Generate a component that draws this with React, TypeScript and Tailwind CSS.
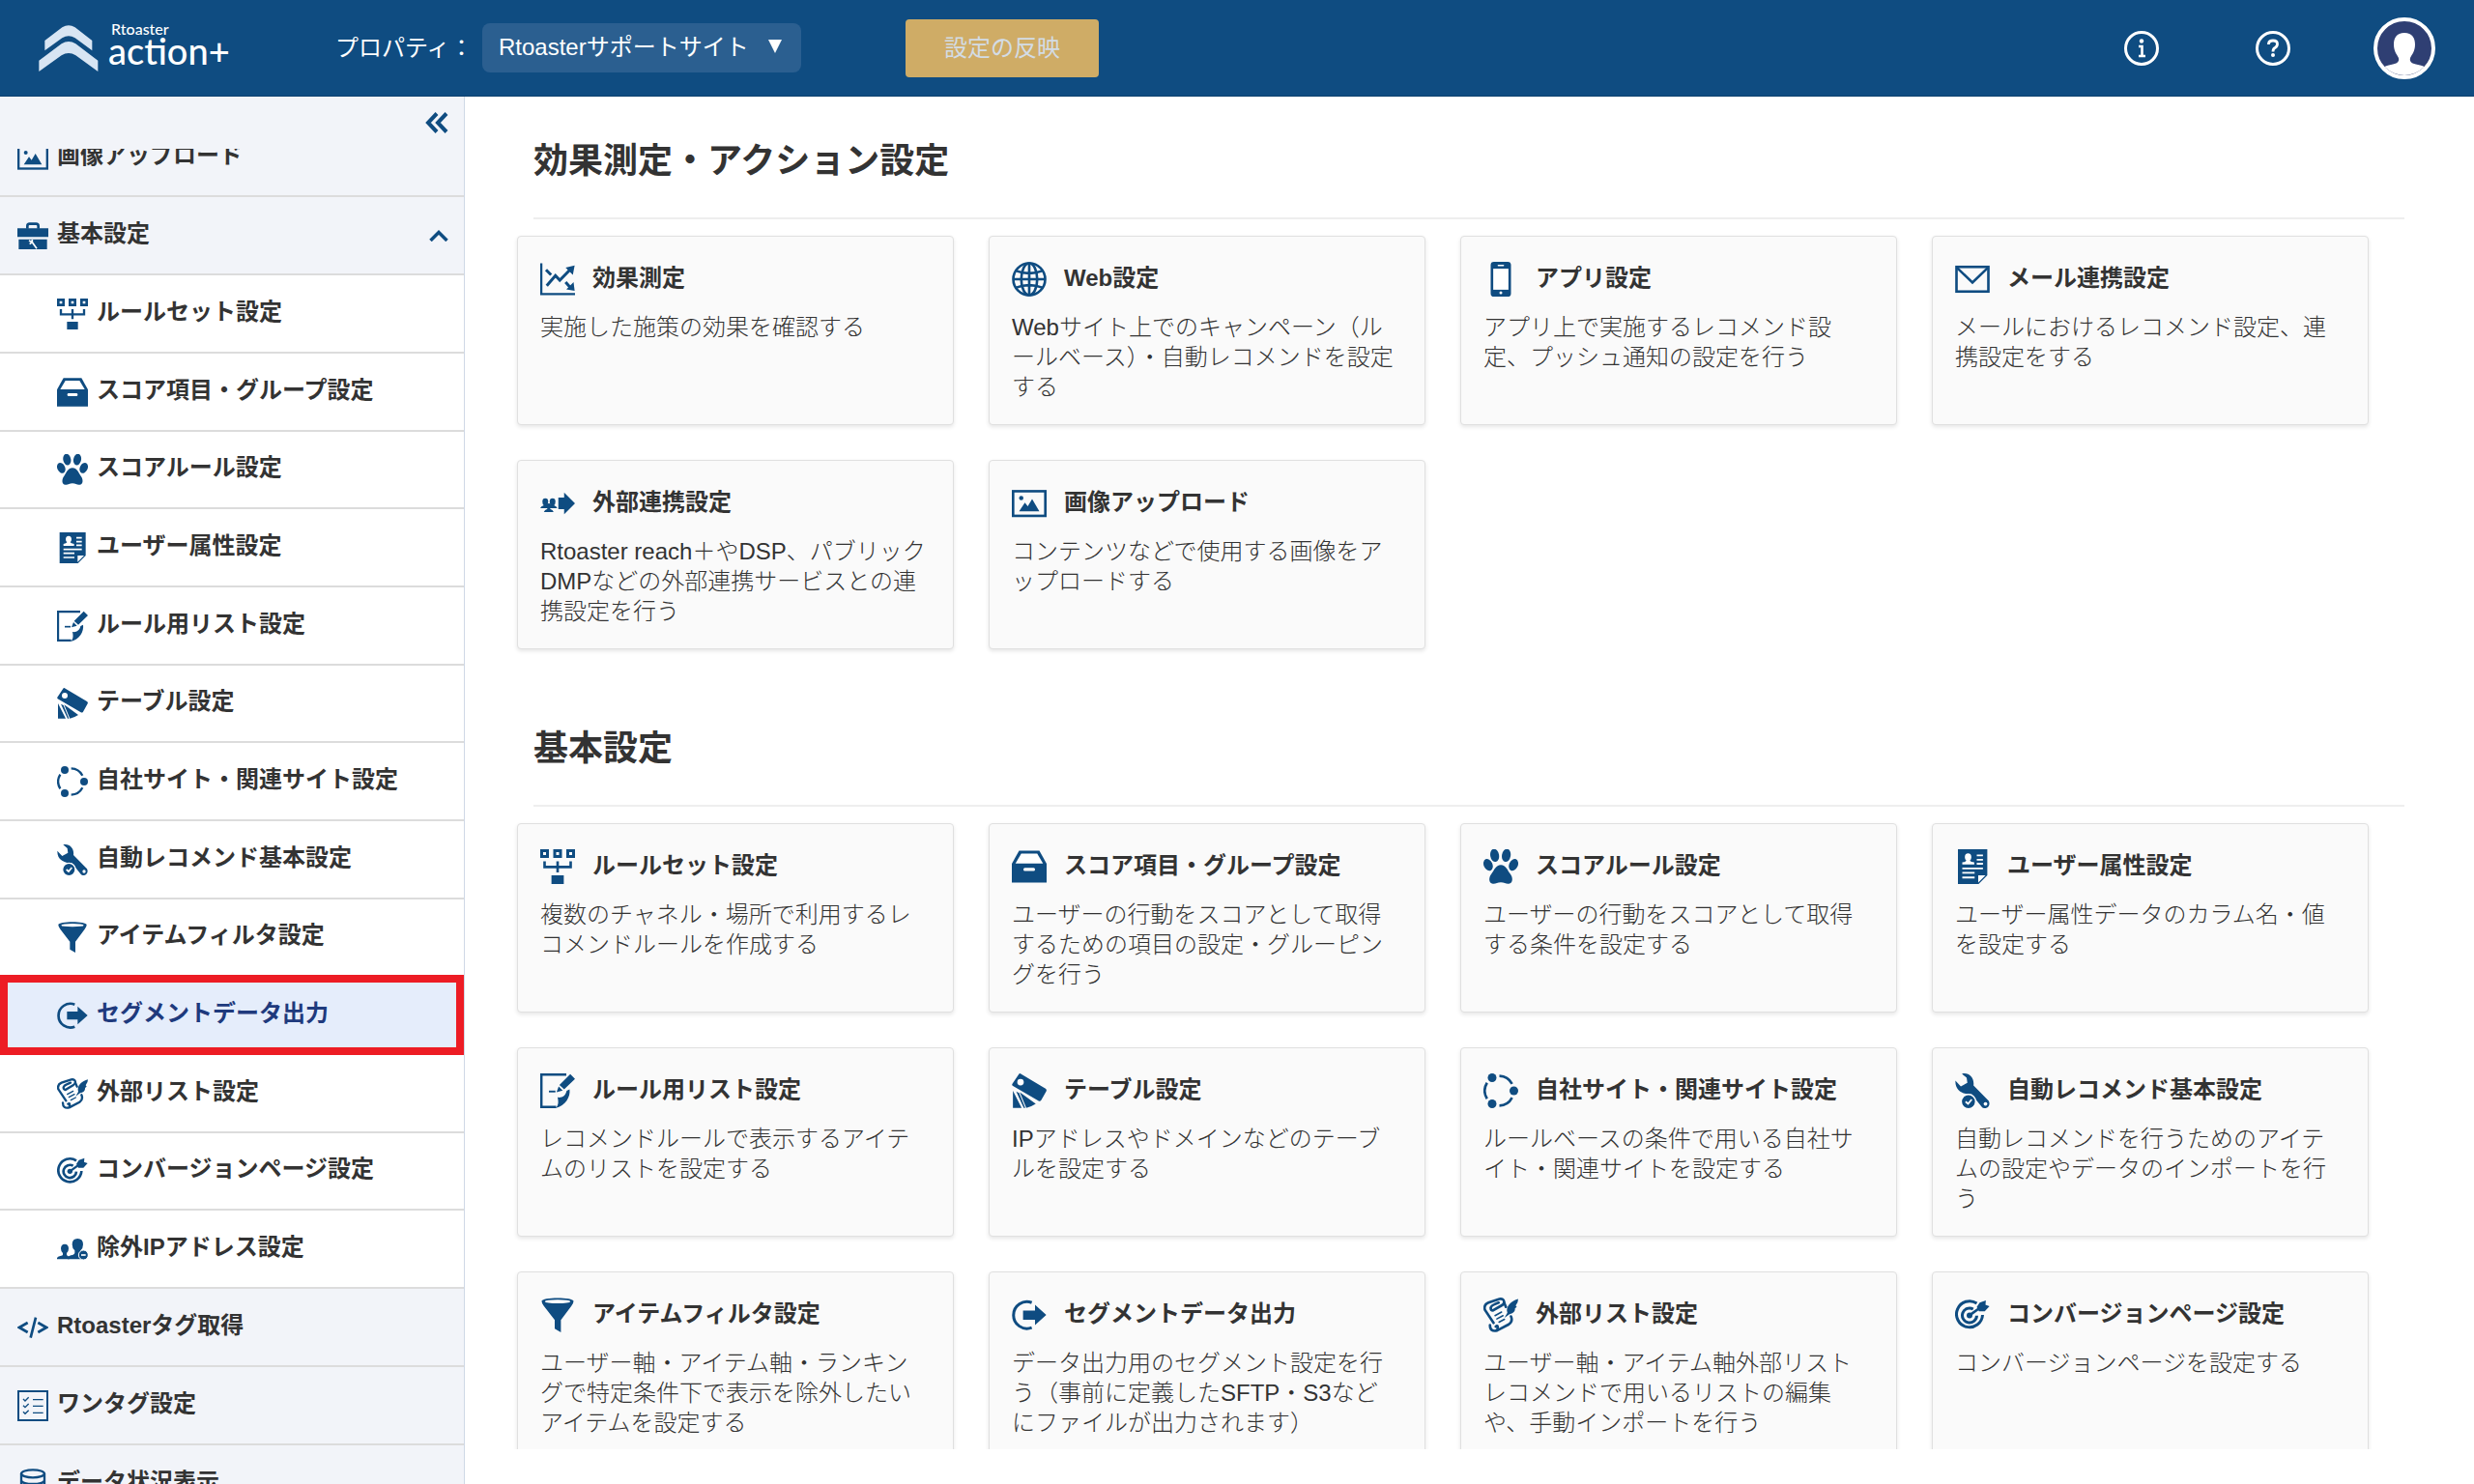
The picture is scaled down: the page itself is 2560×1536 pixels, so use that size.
import type { ReactNode } from 'react'

type IconName =
  | 'chart' | 'globe' | 'phone' | 'mail' | 'external' | 'image' | 'briefcase'
  | 'ruleset' | 'drawer' | 'paw' | 'profile' | 'edit' | 'table' | 'sites'
  | 'wrench' | 'funnel' | 'export' | 'scroll' | 'target' | 'users'
  | 'code' | 'checklist' | 'database'

interface Item {
  icon: IconName
  title: string
  desc?: string
}

// All glyphs share a 96x96 box
const ICONS: Record<IconName, ReactNode> = {
  chart: (
    <>
      <path d="M3 4V89H96" fill="none" stroke="currentColor" strokeWidth="6" />
      <path d="M18 66L42 38L54 51L84 20M16 22L30 36M70 56L84 72" fill="none" stroke="currentColor" strokeWidth="8" />
      <path d="M70 16L95 10L90 36ZM95 80L72 76L92 56Z" fill="currentColor" />
    </>
  ),
  globe: (
    <g fill="none" stroke="currentColor" strokeWidth="7">
      <circle cx="48" cy="48" r="44" />
      <ellipse cx="48" cy="48" rx="22" ry="44" />
      <path d="M48 4V92M4 48H92M12 25Q48 38 84 25M12 71Q48 58 84 71" />
    </g>
  ),
  phone: (
    <>
      <rect x="20" y="0" width="56" height="96" rx="9" fill="currentColor" />
      <rect x="27" y="19" width="42" height="58" fill="#fff" />
      <rect x="39" y="8" width="18" height="4" rx="2" fill="#fff" />
      <circle cx="48" cy="85" r="4" fill="#fff" />
    </>
  ),
  mail: (
    <g fill="none" stroke="currentColor" strokeWidth="7">
      <rect x="4" y="14" width="88" height="68" />
      <path d="M4 15L48 57L92 15" />
    </g>
  ),
  external: (
    <g fill="currentColor">
      <path d="M50 32H66V18L96 48L66 78V64H50Z" />
      <path d="M14 34q8 0 8 9q0 7-4 10q8 2 10 8H0q2-6 10-8q-4-3-4-10q0-9 8-9Z" />
      <path d="M34 34q8 0 8 9q0 7-4 10q7 2 9 8H22q2-6 8-8q-4-3-4-10q0-9 8-9Z" />
      <path d="M24 48q6 0 6 8q0 5-3 7q8 2 10 9H10q2-7 10-9q-3-2-3-7q0-8 7-8Z" />
    </g>
  ),
  image: (
    <>
      <rect x="3.500" y="14.500" width="89" height="68" fill="none" stroke="currentColor" strokeWidth="7" />
      <circle cx="26" cy="33" r="6" fill="currentColor" />
      <path d="M20 70L36 46L44 56L56 36L76 70Z" fill="currentColor" />
    </>
  ),
  briefcase: (
    <>
      <path d="M31 26V18Q31 11 38 11H58Q65 11 65 18V26" fill="none" stroke="currentColor" strokeWidth="8" />
      <path d="M0 25H96V52H0ZM4 59H92V90H4Z" fill="currentColor" />
      <path d="M36 63L46 68L60 88M38 74L46 68L46 60" fill="none" stroke="#fff" strokeWidth="5" />
    </>
  ),
  ruleset: (
    <>
      <path d="M4 4H20V20H4ZM40 4H56V20H40ZM76 4H92V20H76Z" fill="none" stroke="currentColor" strokeWidth="8" />
      <path d="M12 33V49H84V33M48 33V64" fill="none" stroke="currentColor" strokeWidth="7" />
      <path d="M31 72H65V96H31Z" fill="currentColor" />
    </>
  ),
  drawer: (
    <>
      <path d="M20 4H76L96 40V92H0V40Z" fill="currentColor" />
      <path d="M26 12H70L86 39H10Z" fill="#fff" />
      <rect x="32" y="51" width="32" height="9" rx="4" fill="#fff" />
    </>
  ),
  paw: (
    <g fill="currentColor">
      <ellipse cx="31" cy="17" rx="12" ry="18" transform="rotate(-10 31 17)" />
      <ellipse cx="63" cy="17" rx="12" ry="18" transform="rotate(10 63 17)" />
      <ellipse cx="13" cy="43" rx="12" ry="17" transform="rotate(-25 13 43)" />
      <ellipse cx="83" cy="43" rx="12" ry="17" transform="rotate(25 83 43)" />
      <path d="M48 43C62 43 66 57 74 68C82 78 82 94 70 95C62 96 58 91 48 91C38 91 34 96 26 95C14 94 14 78 22 68C30 57 34 43 48 43Z" />
    </g>
  ),
  profile: (
    <>
      <path d="M8 0H89V72L65 96H8Z" fill="currentColor" />
      <path d="M64 72H84L64 92Z" fill="#fff" />
      <path d="M36 11q9 0 9 11q0 6-4 9q2 4 12 5v6H20v-6q9-1 11-5q-4-3-4-9q0-11 9-11Z" fill="#fff" />
      <path d="M60 17H77M60 29H77M60 40H77M20 53H77M20 65H54M20 78H54" stroke="#fff" strokeWidth="5" />
    </>
  ),
  edit: (
    <>
      <path d="M72 3H3V93H44" fill="none" stroke="currentColor" strokeWidth="7" />
      <path d="M81 44C84 64 70 90 42 96C52 88 50 76 48 66C60 68 70 62 73 48Z" fill="currentColor" />
      <path d="M83 2L96 15L66 44L53 32ZM51 36L62 47L45 52Z" fill="currentColor" />
      <path d="M24 50H42" stroke="currentColor" strokeWidth="5" />
    </>
  ),
  table: (
    <>
      <path d="M20 1Q22-1 26 2L93 42Q97 45 95 49L81 74Q78 78 74 76L2 34Q0 32 1 29Z" fill="currentColor" />
      <circle cx="24" cy="24" r="9" fill="#fff" />
      <path d="M3 48V95H27ZM12 50L33 95H37L20 54ZM22 52L40 95Q54 92 66 84Z" fill="currentColor" />
    </>
  ),
  sites: (
    <>
      <g fill="currentColor">
        <circle cx="24" cy="12" r="12" />
        <circle cx="84" cy="48" r="12" />
        <circle cx="24" cy="84" r="12" />
      </g>
      <path d="M44 7A41 41 0 0 1 79 29M79 67A41 41 0 0 1 44 89M10 26A42 42 0 0 0 10 70" fill="none" stroke="currentColor" strokeWidth="7" />
    </>
  ),
  wrench: (
    <>
      <path d="M19 1C38-4 54 12 51 33L93 76C100 90 86 101 75 94L46 58C22 58 0 48 1 20L16 36L34 26L32 12Z" fill="currentColor" />
      <circle cx="84" cy="84" r="5" fill="#fff" />
      <circle cx="37" cy="78" r="20" fill="currentColor" stroke="#fff" strokeWidth="4" />
      <path d="M29 78L36 84L46 72" fill="none" stroke="#fff" strokeWidth="5" />
    </>
  ),
  funnel: (
    <>
      <path d="M4 10C4-2 92-2 92 10Q92 16 86 23L57 62V96L40 86V62L10 23Q4 16 4 10Z" fill="currentColor" />
      <ellipse cx="48" cy="11" rx="35" ry="5" fill="#fff" />
    </>
  ),
  export: (
    <>
      <path d="M55 14A37 37 0 1 0 55 83" fill="none" stroke="currentColor" strokeWidth="8" />
      <path d="M31 36H64V20L95 48L64 76V61H31Z" fill="currentColor" />
    </>
  ),
  scroll: (
    <>
      <g fill="none" stroke="currentColor" strokeWidth="7" strokeLinecap="round">
        <path d="M28 70L4 34Q0 20 14 14L44 4Q56 2 57 12Q57 18 50 22L26 36Q20 36 20 28Q22 22 30 19L42 14" />
        <path d="M57 14L62 26M76 52Q82 66 70 74L38 91Q18 96 18 76M34 80Q42 74 38 90" />
        <path d="M32 50L50 40M37 59L54 50M43 68L58 60" strokeWidth="4" />
      </g>
      <path d="M96 4C78 8 60 24 66 42L58 56L72 46C84 44 88 36 87 30L92 26L89 22Q96 14 96 4Z" fill="currentColor" />
    </>
  ),
  target: (
    <>
      <path d="M60 16A36 36 0 1 0 76 48M50 32A20 20 0 1 0 60 50" fill="none" stroke="currentColor" strokeWidth="8" />
      <circle cx="40" cy="49" r="8" fill="currentColor" />
      <path d="M40 49L72 26" stroke="currentColor" strokeWidth="7" />
      <path d="M60 26L68 14L85 8L84 20L95 24L82 38L66 38Z" fill="currentColor" />
    </>
  ),
  users: (
    <>
      <path d="M24 32q12 0 12 14q0 10-6 14v6q3 4 8 5v8H0v-4q2-4 10-6q8-2 8-4v-5q-6-4-6-14q0-14 12-14Z" fill="currentColor" />
      <path d="M64 15q17 0 17 18q0 12-8 19v8q4 4 14 7v12H33v-5q2-5 10-7q12-3 12-8v-7q-8-7-8-19q0-18 17-18Z" fill="currentColor" />
      <circle cx="82" cy="66" r="15" fill="currentColor" stroke="#fff" strokeWidth="3" />
      <path d="M75 66H89" stroke="#fff" strokeWidth="5" />
    </>
  ),
  code: (
    <path d="M32 33L6 48L32 63M64 33L90 48L64 63M57 17L41 80" fill="none" stroke="currentColor" strokeWidth="8" />
  ),
  checklist: (
    <>
      <rect x="3" y="3" width="90" height="90" fill="none" stroke="currentColor" strokeWidth="6" />
      <path d="M18 27L24 33L35 22M18 47L24 53L35 42M18 67L24 73L35 62M48 29H80M48 49H80M48 70H80" fill="none" stroke="currentColor" strokeWidth="4" />
    </>
  ),
  database: (
    <g fill="none" stroke="currentColor" strokeWidth="7">
      <ellipse cx="48" cy="16" rx="36" ry="12" />
      <path d="M12 16V80C12 96 84 96 84 80V16M12 36C12 52 84 52 84 36M12 58C12 74 84 74 84 58" />
    </g>
  ),
}

const ACTION_ITEMS: Item[] = [
  { icon: 'chart', title: '効果測定', desc: '実施した施策の効果を確認する' },
  { icon: 'globe', title: 'Web設定', desc: 'Webサイト上でのキャンペーン（ルールベース）・自動レコメンドを設定する' },
  { icon: 'phone', title: 'アプリ設定', desc: 'アプリ上で実施するレコメンド設定、プッシュ通知の設定を行う' },
  { icon: 'mail', title: 'メール連携設定', desc: 'メールにおけるレコメンド設定、連携設定をする' },
  { icon: 'external', title: '外部連携設定', desc: 'Rtoaster reach＋やDSP、パブリックDMPなどの外部連携サービスとの連携設定を行う' },
  { icon: 'image', title: '画像アップロード', desc: 'コンテンツなどで使用する画像をアップロードする' },
]

const BASIC_ITEMS: Item[] = [
  { icon: 'ruleset', title: 'ルールセット設定', desc: '複数のチャネル・場所で利用するレコメンドルールを作成する' },
  { icon: 'drawer', title: 'スコア項目・グループ設定', desc: 'ユーザーの行動をスコアとして取得するための項目の設定・グルーピングを行う' },
  { icon: 'paw', title: 'スコアルール設定', desc: 'ユーザーの行動をスコアとして取得する条件を設定する' },
  { icon: 'profile', title: 'ユーザー属性設定', desc: 'ユーザー属性データのカラム名・値を設定する' },
  { icon: 'edit', title: 'ルール用リスト設定', desc: 'レコメンドルールで表示するアイテムのリストを設定する' },
  { icon: 'table', title: 'テーブル設定', desc: 'IPアドレスやドメインなどのテーブルを設定する' },
  { icon: 'sites', title: '自社サイト・関連サイト設定', desc: 'ルールベースの条件で用いる自社サイト・関連サイトを設定する' },
  { icon: 'wrench', title: '自動レコメンド基本設定', desc: '自動レコメンドを行うためのアイテムの設定やデータのインポートを行う' },
  { icon: 'funnel', title: 'アイテムフィルタ設定', desc: 'ユーザー軸・アイテム軸・ランキングで特定条件下で表示を除外したいアイテムを設定する' },
  { icon: 'export', title: 'セグメントデータ出力', desc: 'データ出力用のセグメント設定を行う（事前に定義したSFTP・S3などにファイルが出力されます）' },
  { icon: 'scroll', title: '外部リスト設定', desc: 'ユーザー軸・アイテム軸外部リストレコメンドで用いるリストの編集や、手動インポートを行う' },
  { icon: 'target', title: 'コンバージョンページ設定', desc: 'コンバージョンページを設定する' },
]

const SUBMENU: Item[] = [...BASIC_ITEMS, { icon: 'users', title: '除外IPアドレス設定' }]

const LOWER_MENU: Item[] = [
  { icon: 'code', title: 'Rtoasterタグ取得' },
  { icon: 'checklist', title: 'ワンタグ設定' },
  { icon: 'database', title: 'データ状況表示' },
]

const ACTIVE_TITLE = 'セグメントデータ出力'

function Icon({ name, className }: { name: IconName; className: string }) {
  return (
    <svg viewBox="0 0 96 96" aria-hidden="true" className={`shrink-0 text-[#0f4c81] ${className}`}>
      {ICONS[name]}
    </svg>
  )
}

function Logo() {
  return (
    <a href="#" className="flex items-center gap-[10px] pl-10 text-white">
      <svg viewBox="0 0 184 144" className="h-12 w-[62px]" aria-hidden="true">
        <g fill="#d8e5f3">
          <path d="M18 48L72 7Q92-6 112 7L165 48V79L112 40Q92 28 72 40L18 79Z" />
          <path d="M0 110L70 58Q92 44 114 58L183 110V144L114 94Q92 80 70 94L0 144Z" />
        </g>
      </svg>
      <span className="flex flex-col pb-[11px] font-['Lato','Liberation_Sans',sans-serif] font-medium">
        <span className="pl-[3px] text-base leading-4">Rtoaster</span>
        <span className="text-[38px] leading-7">action+</span>
      </span>
    </a>
  )
}

function Header() {
  return (
    <header className="flex h-[100px] shrink-0 items-center border-b border-[#0d416f] bg-[#0f4c81] text-white">
      <div className="w-[347px] shrink-0">
        <Logo />
      </div>
      <label htmlFor="property" className="w-[152px] shrink-0 whitespace-nowrap">プロパティ：</label>
      <div className="relative shrink-0">
        <select
          id="property"
          className="h-[51px] w-[330px] appearance-none rounded-lg bg-[#2b5f90] pb-0.5 pl-[17px] text-2xl text-white"
        >
          <option>Rtoasterサポートサイト</option>
        </select>
        <svg viewBox="0 0 14 14" className="pointer-events-none absolute top-[17px] right-5 size-[14px]" aria-hidden="true">
          <path d="M0 0H14L7 14Z" fill="#fff" />
        </svg>
      </div>
      <button type="button" className="ml-[108px] h-[60px] w-[200px] shrink-0 rounded-sm bg-[#cfac66] text-[#d3dce5]">
        設定の反映
      </button>
      <nav className="ml-auto flex items-center pr-10">
        <button type="button" aria-label="お知らせ" className="mr-[100px]">
          <svg viewBox="0 0 36 36" className="size-9" aria-hidden="true">
            <circle cx="18" cy="18" r="16.500" fill="none" stroke="#fff" strokeWidth="3" />
            <circle cx="18" cy="10.500" r="2.200" fill="#fff" />
            <path d="M15 16H18.500V26M15 26H22" fill="none" stroke="#fff" strokeWidth="2.600" />
          </svg>
        </button>
        <button type="button" aria-label="ヘルプ" className="mr-[86px]">
          <svg viewBox="0 0 36 36" className="size-9" aria-hidden="true">
            <circle cx="18" cy="18" r="16.500" fill="none" stroke="#fff" strokeWidth="3" />
            <path d="M13.500 14V13Q14 10 18 10Q22.500 10 22.500 13.500Q22.500 16 20 17.500Q18 18.500 18 21.500" fill="none" stroke="#fff" strokeWidth="2.800" />
            <circle cx="18" cy="25" r="2" fill="#fff" />
          </svg>
        </button>
        <button type="button" aria-label="アカウント" className="size-16 overflow-hidden rounded-full border-4 border-white bg-[#2f3f73]">
          <svg viewBox="0 0 56 56" className="size-14" aria-hidden="true">
            <path d="M28 12C36 12 39 17 39 24C39 31 36 34 34 38C33 42 36 44 42 45Q49 46 50 49V56H6V49Q7 46 14 45C20 44 23 42 22 38C20 34 17 31 17 24C17 17 20 12 28 12Z" fill="#fff" />
          </svg>
        </button>
      </nav>
    </header>
  )
}

function TopMenuRow({ item, expanded }: { item: Item; expanded?: boolean }) {
  return (
    <a href="#" className="flex h-[81px] items-center gap-[9px] border-b-2 border-[#dcdcdc] bg-[#f2f4f9] pr-4 pl-[18px] font-bold">
      <Icon name={item.icon} className="size-8" />
      <span className="pb-1">{item.title}</span>
      {expanded && (
        <svg viewBox="0 0 20 12" className="ml-auto h-3 w-5" aria-hidden="true">
          <path d="M1.500 11L10 2.500L18.500 11" fill="none" stroke="#0f4c81" strokeWidth="3.500" />
        </svg>
      )}
    </a>
  )
}

function SubMenuRow({ item }: { item: Item }) {
  const active = item.title === ACTIVE_TITLE
  return (
    <li className={`relative h-[81px] nth-[3n]:h-[80px] ${active ? 'bg-[#e5edfb] text-[#1f3a7d]' : 'bg-white'}`}>
      <a href="#" className="flex h-full items-center gap-[9px] border-b-2 border-[#dcdcdc] pl-[59px] font-bold">
        <Icon name={item.icon} className="size-8" />
        <span className="pb-1">{item.title}</span>
      </a>
      {active && <div className="pointer-events-none absolute inset-x-0 -top-0.5 bottom-0 border-8 border-[#ed1c24]" />}
    </li>
  )
}

function Sidebar() {
  return (
    <aside className="flex w-[481px] shrink-0 flex-col border-r border-[#cfd8e6] bg-[#f2f4f9]">
      <div className="flex h-[54px] shrink-0 items-center justify-end pr-4">
        <button type="button" aria-label="メニューを閉じる">
          <svg viewBox="0 0 24 22" className="h-[22px] w-6" aria-hidden="true">
            <path d="M12 1.500L3 11L12 20.500M22 1.500L13 11L22 20.500" fill="none" stroke="#0f4c81" strokeWidth="4" />
          </svg>
        </button>
      </div>
      <nav className="min-h-0 flex-1 overflow-hidden">
        <div className="-mt-[31px]">
          <TopMenuRow item={ACTION_ITEMS[5]} />
          <TopMenuRow item={{ icon: 'briefcase', title: '基本設定' }} expanded />
          <ul>
            {SUBMENU.map(item => <SubMenuRow key={item.title} item={item} />)}
          </ul>
          {LOWER_MENU.map(item => <TopMenuRow key={item.title} item={item} />)}
        </div>
      </nav>
    </aside>
  )
}

function Card({ item }: { item: Item }) {
  return (
    <a href="#" className="min-h-[196px] rounded-sm border border-[#e0e0e0] bg-[#fafafa] pt-[26px] pr-[27px] pb-5 pl-[23px] shadow-[0_2px_4px_rgba(0,0,0,0.1)]">
      <div className="flex h-9 items-center gap-[18px]">
        <Icon name={item.icon} className="size-9" />
        <h3 className="pb-0.5 font-bold">{item.title}</h3>
      </div>
      <p className="mt-4 leading-[31px] font-light">{item.desc}</p>
    </a>
  )
}

function Section({ title, items }: { title: string; items: Item[] }) {
  return (
    <section>
      <h2 className="mr-[72px] ml-[71px] border-b-2 border-[#eeeeee] pb-[31px] text-4xl leading-[54px] font-bold">{title}</h2>
      <div className="mt-[17px] mr-[109px] ml-[54px] grid grid-cols-4 gap-9">
        {items.map(item => <Card key={item.title} item={item} />)}
      </div>
    </section>
  )
}

export default function App() {
  return (
    <div lang="ja" className="flex h-screen flex-col overflow-hidden bg-white font-['Liberation_Sans','Noto_Sans_CJK_JP',sans-serif] text-2xl text-[#333333]">
      <Header />
      <div className="flex min-h-0 flex-1">
        <Sidebar />
        <main className="mb-9 flex min-w-0 flex-1 flex-col gap-[76px] overflow-hidden pt-10">
          <Section title="効果測定・アクション設定" items={ACTION_ITEMS} />
          <Section title="基本設定" items={BASIC_ITEMS} />
        </main>
      </div>
    </div>
  )
}
